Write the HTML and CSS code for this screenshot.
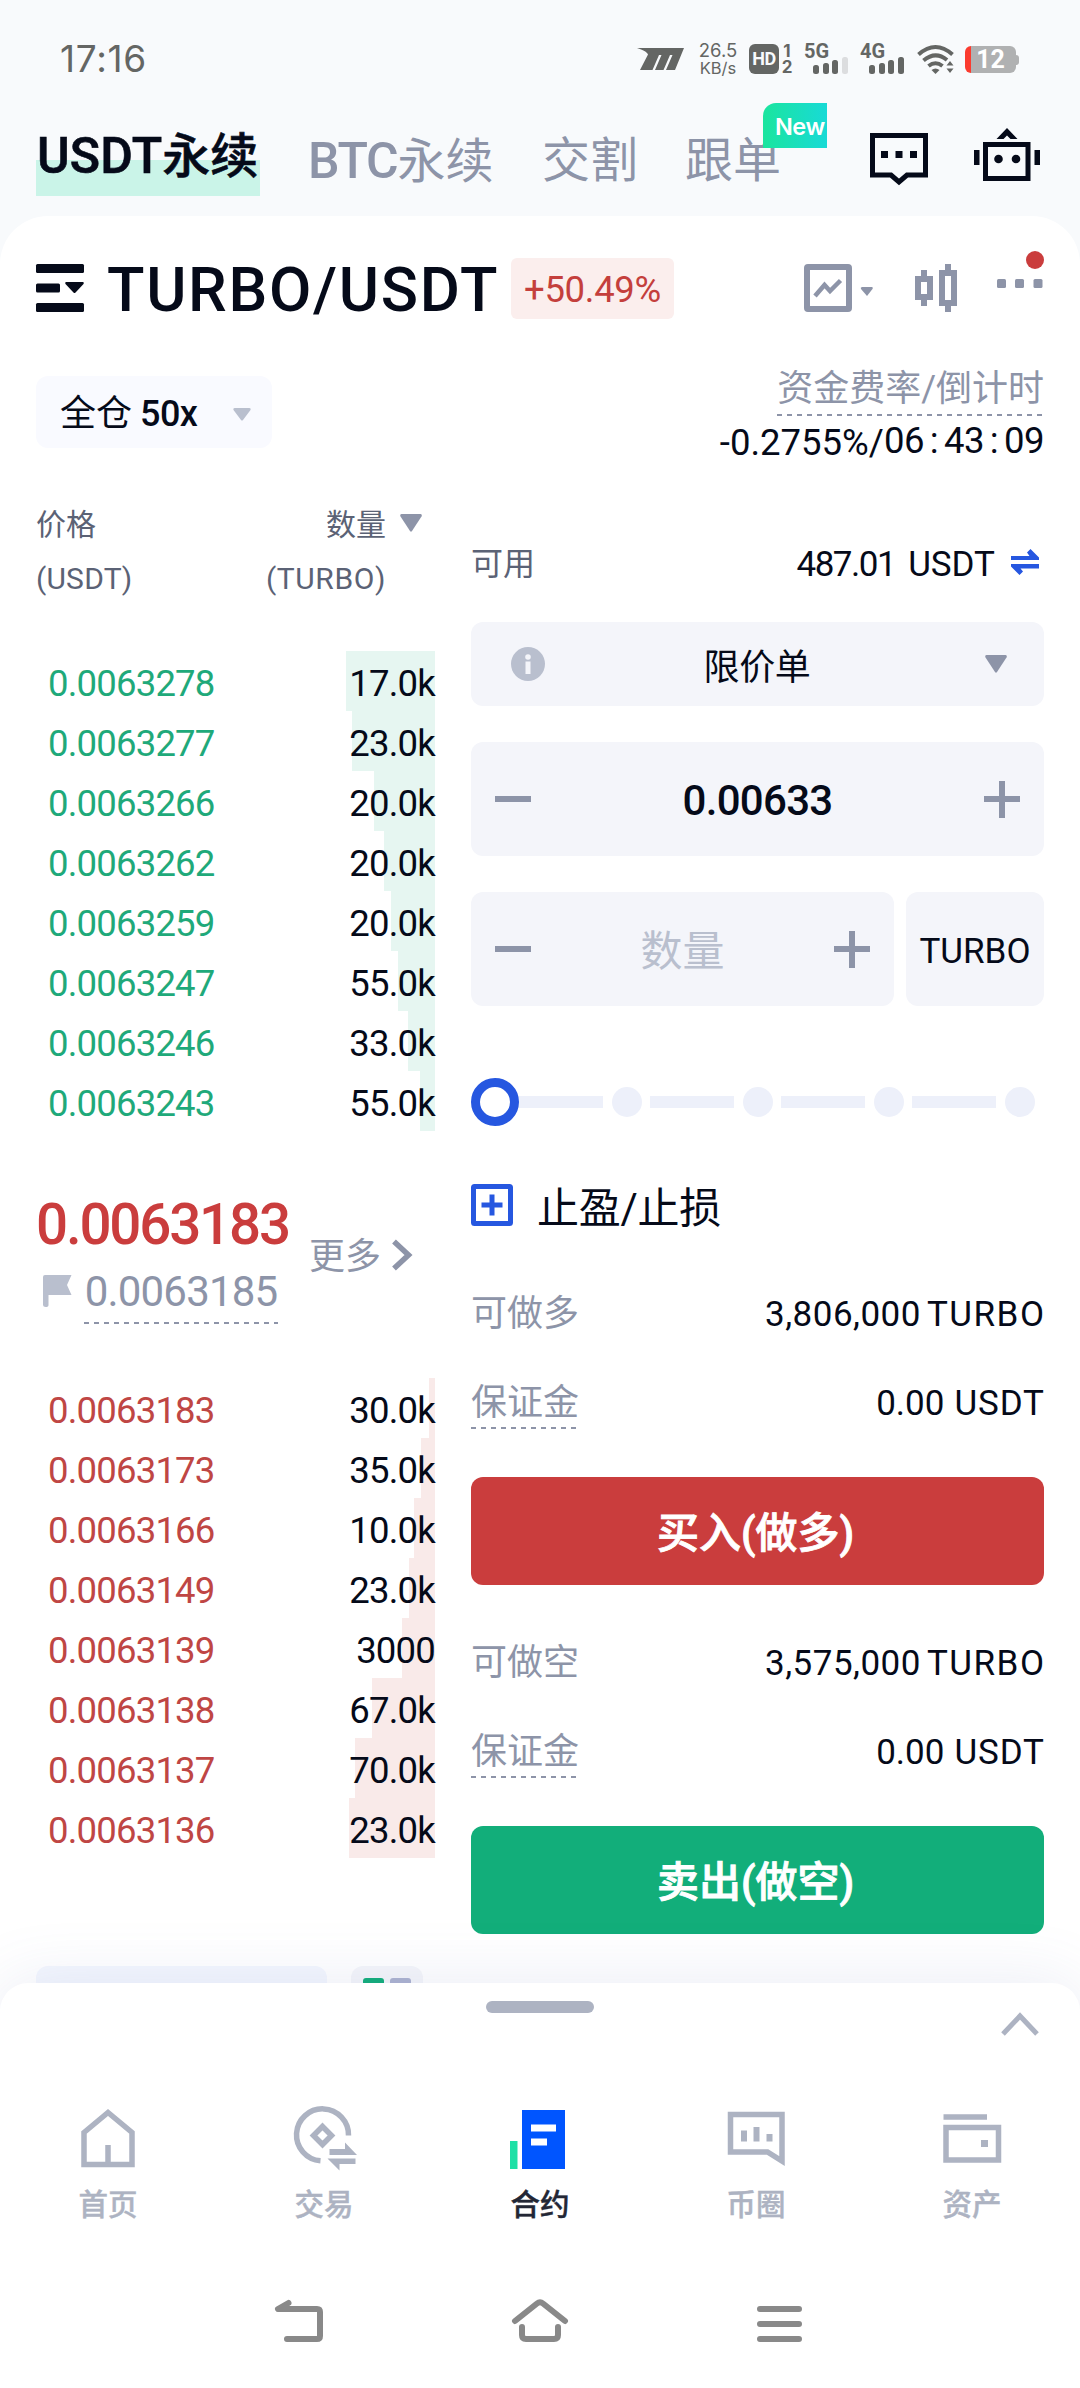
FILE: index.html
```html
<!DOCTYPE html>
<html lang="zh-CN">
<head>
<meta charset="utf-8">
<title>TURBO/USDT 永续合约</title>
<link rel="stylesheet" href="styles.css">
</head>
<body>
<div class="status">
  <span class="clock">17:16</span>
  <svg class="st-m" width="48" height="24" viewBox="0 0 48 24"><path fill="#646664" d="M0 1H47L38 23H29L35.500 8H33L26.500 23H18L24.500 8H22L15.500 23H3L11 7.500C10 5 6 3 0 1Z"/></svg>
  <div class="speed"><span>26.5</span><span>KB/s</span></div>
  <div class="hd">HD</div>
  <div class="sims"><span>1</span><span>2</span></div>
  <div class="net net-5g"><b>5G</b><i class="b1"></i><i class="b2"></i><i class="b3"></i><i class="b4 off"></i></div>
  <div class="net net-4g"><b>4G</b><i class="b1"></i><i class="b2"></i><i class="b3"></i><i class="b4"></i></div>
  <svg class="wifi" width="38" height="30" viewBox="0 0 38 30"><g fill="none" stroke="#646664" stroke-width="4"><path d="M1.500 10.500Q18.500-4.500 35.500 10.500"/><path d="M6.500 16.500Q18.500 6.500 30 16"/><path d="M11.500 22Q18.500 16.500 25.500 22"/></g><path fill="#646664" d="M14.500 26Q18.500 23 22.500 26L18.500 30ZM29.500 21.500L33 17L36.500 21.500ZM29.500 24.500H36.500L33 29Z"/></svg>
  <div class="battery"><span>12</span></div>
</div>

<nav class="tabs">
  <a class="tab active"><span class="lat">USDT</span>永续</a>
  <a class="tab t-btc"><span class="lat">BTC</span>永续</a>
  <a class="tab t-del">交割</a>
  <a class="tab t-copy">跟单<em class="new">New</em></a>
  <svg class="ic-chat" width="58" height="52" viewBox="0 0 58 52"><path fill="none" stroke="#050a19" stroke-width="5" d="M2.500 2.500H55.500V42H37L29 49L21 42H2.500Z"/><path fill="#050a19" d="M11 18h7v7h-7zM25.500 18h7v7h-7zM40 18h7v7h-7z"/></svg>
  <svg class="ic-bot" width="66" height="54" viewBox="0 0 66 54"><path fill="none" stroke="#050a19" stroke-width="5" d="M11.500 16.500H54V50.500H11.500Z"/><path fill="#050a19" d="M0 22h5.500v15H0zM60.500 22H66v15h-5.500zM33 0L43.500 11H36.500L33 7.500L29.500 11H22.500Z"/><circle cx="24.500" cy="31" r="4.300" fill="#050a19"/><circle cx="42" cy="31" r="4.300" fill="#050a19"/></svg>
</nav>

<main class="card">
  <header class="pair">
    <svg width="48" height="48" viewBox="0 0 48 48"><g fill="#050a19"><rect width="48" height="9" rx="1.500"/><rect y="19.500" width="24" height="9" rx="1.500"/><rect y="39" width="48" height="9" rx="1.500"/><path d="M30 18H47Q48.500 18.500 47.500 20L39.500 28.500Q38.500 29.500 37.500 28.500L29.500 20Q28.500 18.500 30 18Z"/></g></svg>
    <h1>TURBO/USDT</h1>
    <span class="change">+50.49%</span>
    <svg class="ic-chart" width="69" height="48" viewBox="0 0 69 48"><rect x="3" y="3" width="42" height="42" fill="none" stroke="#8d94a8" stroke-width="6" rx="1"/><path fill="none" stroke="#8d94a8" stroke-width="4.500" d="M11 32L20.500 21L26 27L36.500 16.500"/><path fill="#8d94a8" d="M58 23H68Q69.500 23.500 68.500 25L63 32L57 25Q56 23.500 58 23Z"/></svg>
    <svg class="ic-candle" width="42" height="48" viewBox="0 0 42 48"><g fill="none" stroke="#8d94a8" stroke-width="6"><path d="M3 15H15V33H3ZM9 6V13M9 35V42M27 9H39V39H27ZM33 0V7M33 41V48"/></g></svg>
    <svg class="ic-more" width="47" height="60" viewBox="0 0 47 60"><g fill="#8d94a8"><rect y="29" width="9" height="9" rx="1.500"/><rect x="18" y="29" width="9" height="9" rx="1.500"/><rect x="36.500" y="29" width="9" height="9" rx="1.500"/></g><circle cx="38" cy="10" r="9" fill="#ca3d3d"/></svg>
  </header>

  <section class="sub">
    <div class="lever"><span>全仓 <b>50x</b></span><svg width="18" height="13" viewBox="0 0 18 13"><path fill="#b9bfce" d="M1.500 0H16.500Q18.500.5 17.500 2L10 12Q9 13 8 12L.5 2Q-.5.5 1.500 0Z"/></svg></div>
    <div class="funding">
      <span class="f-label">资金费率/倒计时</span>
      <div class="f-val"><span class="rate">-0.2755%/</span><span class="hh">06</span><span class="col">:</span><span>43</span><span class="col">:</span><span>09</span></div>
    </div>
  </section>

  <section class="body">
    <div class="book">
      <div class="bk-head"><div>价格<br><span class="u">(USDT)</span></div><div class="r">数量<br><span class="u wide">(TURBO)</span></div><svg width="22" height="18" viewBox="0 0 22 18"><path fill="#8d94a8" d="M1.500 0H20.500Q22.500.5 21.500 2.500L12 17Q11 18.500 10 17L.5 2.500Q-.5.5 1.500 0Z"/></svg></div>
      <div class="rows green">
        <div class="row"><i style="width:89px"></i><span>0.0063278</span><b>17.0k</b></div>
        <div class="row"><i style="width:83px"></i><span>0.0063277</span><b>23.0k</b></div>
        <div class="row"><i style="width:61px"></i><span>0.0063266</span><b>20.0k</b></div>
        <div class="row"><i style="width:51px"></i><span>0.0063262</span><b>20.0k</b></div>
        <div class="row"><i style="width:44px"></i><span>0.0063259</span><b>20.0k</b></div>
        <div class="row"><i style="width:37px"></i><span>0.0063247</span><b>55.0k</b></div>
        <div class="row"><i style="width:27px"></i><span>0.0063246</span><b>33.0k</b></div>
        <div class="row"><i style="width:15px"></i><span>0.0063243</span><b>55.0k</b></div>
      </div>
      <div class="mid">
        <div class="mid-l">
          <div class="last">0.0063183</div>
          <div class="mark"><svg width="29" height="32" viewBox="0 0 29 32"><path fill="#b9bfce" d="M0 2Q0 0 2 0H28.500L24 10L28.500 20H5.500V30Q5.500 32 2.700 32Q0 32 0 30Z"/></svg><span>0.0063185</span></div>
        </div>
        <div class="more">更多<svg width="21" height="32" viewBox="0 0 21 32"><path fill="none" stroke="#8d94a8" stroke-width="5.500" d="M2 2.500L16.500 16L2 29.500"/></svg></div>
      </div>
      <div class="rows red">
        <div class="row"><i style="width:6px"></i><span>0.0063183</span><b>30.0k</b></div>
        <div class="row"><i style="width:14px"></i><span>0.0063173</span><b>35.0k</b></div>
        <div class="row"><i style="width:21px"></i><span>0.0063166</span><b>10.0k</b></div>
        <div class="row"><i style="width:26px"></i><span>0.0063149</span><b>23.0k</b></div>
        <div class="row"><i style="width:33px"></i><span>0.0063139</span><b>3000</b></div>
        <div class="row"><i style="width:63px"></i><span>0.0063138</span><b>67.0k</b></div>
        <div class="row"><i style="width:80px"></i><span>0.0063137</span><b>70.0k</b></div>
        <div class="row"><i style="width:86px"></i><span>0.0063136</span><b>23.0k</b></div>
      </div>
      <div class="depth"><div class="precision"></div><div class="layout"><i></i><i class="g"></i></div></div>
    </div>

    <div class="order">
      <div class="avail"><span class="k">可用</span><span class="v"><span class="amt">487.01</span><span class="unit">USDT</span></span><svg width="28" height="26" viewBox="0 0 28 26"><path fill="#2657e0" d="M0 7H18.500L16 3.500L19.500 0L28 8.500V11H0ZM28 15V19.500H9.500L12 22.500L8.500 26L0 17.500V15Z"/></svg></div>
      <div class="box select"><svg width="34" height="34" viewBox="0 0 34 34"><circle cx="17" cy="17" r="17" fill="#b9bfce"/><circle cx="17" cy="10" r="2.800" fill="#f4f5fa"/><path stroke="#f4f5fa" stroke-width="5" d="M17 14.500V27"/></svg><span>限价单</span><svg width="22" height="18" viewBox="0 0 22 18"><path fill="#8d94a8" d="M1.500 0H20.500Q22.500.5 21.500 2.500L12 17Q11 18.500 10 17L.5 2.500Q-.5.5 1.500 0Z"/></svg></div>
      <div class="box stepper"><i class="minus"></i><span class="num">0.00633</span><i class="plus"></i></div>
      <div class="qty"><div class="box stepper"><i class="minus"></i><span class="ph">数量</span><i class="plus"></i></div><div class="box unitbox">TURBO</div></div>
      <div class="slider"><i class="knob"></i><i class="track first"></i><i class="dot"></i><i class="track"></i><i class="dot"></i><i class="track"></i><i class="dot"></i><i class="track"></i><i class="dot"></i></div>
      <div class="tpsl"><svg width="42" height="42" viewBox="0 0 42 42"><rect x="2.500" y="2.500" width="37" height="37" rx="1" fill="none" stroke="#2657e0" stroke-width="5"/><path stroke="#2657e0" stroke-width="5" d="M10.500 21H31.500M21 10.500V31.500"/></svg><span>止盈/止损</span></div>
      <div class="kv first"><span class="k">可做多</span><span class="v"><span class="long">3,806,000</span><span class="unit tight">TURBO</span></span></div>
      <div class="kv"><span class="k dash">保证金</span><span class="v">0.00<span class="unit">USDT</span></span></div>
      <button class="btn buy">买入(做多)</button>
      <div class="kv second"><span class="k">可做空</span><span class="v"><span class="long">3,575,000</span><span class="unit tight">TURBO</span></span></div>
      <div class="kv"><span class="k dash">保证金</span><span class="v">0.00<span class="unit">USDT</span></span></div>
      <button class="btn sell">卖出(做空)</button>
    </div>
  </section>
</main>

<footer class="sheet">
  <div class="grip"><i></i><svg width="38" height="24" viewBox="0 0 38 24"><path fill="none" stroke="#adb3c2" stroke-width="5" d="M2 22L19 4L36 22"/></svg></div>
  <nav class="nav">
    <a><svg width="64" height="64" viewBox="0 0 64 64"><path fill="none" stroke="#adb3c2" stroke-width="5.500" d="M8 26.500L32 6.500L56 26.500V58.500H8ZM32 39V57"/></svg>首页</a>
    <a><svg width="64" height="64" viewBox="0 0 64 64"><g fill="none" stroke="#adb3c2"><path stroke-width="5.500" d="M56.500 29.500A26 26 0 1 0 28.500 54.800"/><path stroke-width="5.500" d="M30.500 20.500L39.500 29.500L30.500 38.500L21.500 29.500Z"/></g><path fill="#adb3c2" d="M37.500 43H53V36.500L65 49H37.500ZM35.500 52.500H63.500V58H47.500V64.500Z"/></svg>交易</a>
    <a class="on"><svg width="64" height="64" viewBox="0 0 64 64"><path fill="#1fe0a6" d="M2 35h7.500v28H2z"/><path fill="#0055ff" d="M14 4h43v59H14z"/><path fill="#fff" d="M23 18.500h25v7H23zM23 32.500h16v7H23z"/></svg>合约</a>
    <a><svg width="64" height="64" viewBox="0 0 64 64"><path fill="none" stroke="#adb3c2" stroke-width="5.500" d="M6.500 8.500H58V55L43.500 46H6.500Z"/><path stroke="#adb3c2" stroke-width="6" d="M20 24.500V35.500M32.500 21V35.500M45.500 28V35.500"/></svg>币圈</a>
    <a><svg width="64" height="64" viewBox="0 0 64 64"><path fill="none" stroke="#adb3c2" stroke-width="5.500" d="M3.500 11H47M6 21.500H58.500V54H6Z"/><path fill="#adb3c2" d="M41 34h7v7h-7z"/></svg>资产</a>
  </nav>
  <div class="sys">
    <svg width="48" height="44" viewBox="0 0 48 44"><path fill="none" stroke="#898989" stroke-width="6" stroke-linecap="round" stroke-linejoin="round" d="M13.500 4L3 10H42Q45 10 45 13V37Q45 40 42 40H12"/></svg>
    <svg width="58" height="44" viewBox="0 0 58 44"><path fill="none" stroke="#898989" stroke-width="6" stroke-linecap="round" stroke-linejoin="round" d="M4 22L26 4.500Q29 2 32 4.500L54 22M11 28V36Q11 40 15 40H43Q47 40 47 36V28"/></svg>
    <svg width="48" height="44" viewBox="0 0 48 44"><path fill="none" stroke="#898989" stroke-width="6" stroke-linecap="round" d="M3 10H42M3 25H42M3 40H42"/></svg>
  </div>
</footer>
</body>
</html>
```
FILE: styles.css
```css
* { box-sizing: border-box; }
body {
  margin: 0;
  width: 1080px;
  height: 2388px;
  overflow: hidden;
  display: flex;
  flex-direction: column;
  background: #f8fafc;
  color: #050a19;
  font-family: Roboto, "Noto Sans CJK SC", sans-serif;
  white-space: nowrap;
}
svg { display: block; flex: none; overflow: visible; }
i, em { font-style: normal; }

/* status bar */
.status { flex: none; height: 80px; padding: 38px 60px 0; display: flex; align-items: center; color: #646664; }
.clock { width: 577px; font: 400 37px/44px Inter, sans-serif; letter-spacing: .7px; }
.speed { width: 38px; margin-left: 14px; display: flex; flex-direction: column; align-items: center; font: 400 18.500px/18px Inter, sans-serif; }
.speed span + span { font-size: 16.500px; }
.hd { width: 30px; height: 30px; margin-left: 12px; border-radius: 6px; background: #646664; color: #f8fafc; font: 700 18px/30px Roboto, sans-serif; text-align: center; letter-spacing: -.5px; }
.sims { width: 12px; margin-left: 2px; display: flex; flex-direction: column; font: 700 17px/16px Inter, sans-serif; text-align: center; }
.net { width: 46px; height: 30px; display: flex; align-items: flex-end; gap: 3.700px; padding-left: 9px; position: relative; }
.net b { position: absolute; left: 0; top: -1px; font: 700 20px/16px Roboto, sans-serif; }
.net i { width: 6px; border-radius: 2.500px; background: #646664; }
.net .b1 { height: 9px; }
.net .b2 { height: 11px; }
.net .b3 { height: 14px; }
.net .b4 { height: 17px; }
.net .off { background: #dcdddf; }
.net-5g { margin-left: 11px; }
.net-4g { margin-left: 10px; }
.wifi { margin-left: 11px; }
.battery { width: 51px; height: 27px; margin-left: 10px; border-radius: 6px; background: linear-gradient(90deg, #fb3b2f 6px, #b0b1b2 6px); color: #fff; font: 700 25px/28px Roboto, sans-serif; text-align: center; position: relative; }
.battery::after { content: ""; position: absolute; left: 51px; top: 9px; width: 3px; height: 10px; border-radius: 0 3px 3px 0; background: #b0b1b2; }

/* market tabs */
.tabs { flex: none; height: 136px; padding: 40px 36px 0; display: flex; }
.tab { flex: none; height: 82px; font-size: 48px; line-height: 82px; color: #8d94a8; position: relative; }
.active { width: 224px; height: 76px; padding-left: 1px; line-height: 73px; font-weight: 500; color: #050a19; font-size: 48px; background: linear-gradient(transparent 40px, #caf4e8 40px); -webkit-text-stroke: .6px #050a19; }
.lat { font-size: 50px; letter-spacing: .1px; font-weight: 500; }
.t-btc { width: 184px; margin-left: 48px; }
.t-btc .lat { letter-spacing: -1.300px; }
.t-del { width: 96px; margin-left: 50px; }
.t-copy { width: 95px; margin-left: 47px; }
.new { position: absolute; left: 78px; top: -17px; width: 64px; height: 45px; padding-left: 12px; border-radius: 13px 0 0; background: linear-gradient(90deg, #1be59e, #18dad6); color: #fff; font: 600 23.500px/48px Inter, sans-serif; letter-spacing: -.5px; }
.ic-chat { margin: 13px 0 0 90px; }
.ic-bot { margin: 8px 0 0 46px; }

/* card */
.card { flex: none; height: 1795px; border-radius: 48px 48px 0 0; background: #fff; padding: 0 36px; overflow: hidden; }
.pair { height: 144px; display: flex; align-items: center; }
.pair h1 { width: 404px; margin: 3px 0 0 23px; font: 500 61.500px/72px Roboto, sans-serif; letter-spacing: 1.700px; }
.change { flex: none; width: 163px; height: 61px; border-radius: 6px; background: #fbeeed; color: #c43f3c; font-size: 36.500px; line-height: 63px; letter-spacing: -.3px; text-align: center; }
.ic-chart { margin-left: 130px; }
.ic-candle { margin-left: 42px; }
.ic-more { margin: -16px 0 0 40px; }

.sub { height: 120px; display: flex; justify-content: space-between; align-items: flex-start; }
.lever { width: 236px; height: 72px; margin-top: 16px; padding: 4px 21px 0 24px; border-radius: 12px; background: #f9faff; display: flex; align-items: center; font-size: 36px; line-height: 68px; }
.lever b { font-weight: 500; margin-left: -1px; letter-spacing: -.5px; }
.lever svg { margin-left: auto; }
.funding { padding-top: 6px; display: flex; flex-direction: column; align-items: flex-end; font-size: 36px; }
.f-label { height: 50px; line-height: 47px; color: #8d94a8; background: repeating-linear-gradient(90deg, #8d94a8 0 5px, transparent 5px 10px) 0 100% / 100% 2px no-repeat; }
.f-val { display: flex; line-height: 50px; font-size: 36.500px; letter-spacing: -.5px; }
.rate { padding-top: 2px; letter-spacing: 0; }
.col { width: 20px; text-align: center; }

.body { display: grid; grid-template-columns: 399px 573px; column-gap: 36px; }

/* order book */
.bk-head { height: 126px; margin-bottom: 45px; padding-top: 18px; display: flex; font-size: 30px; line-height: 54px; color: #5b6275; }
.bk-head .r { width: 130px; margin-left: auto; text-align: right; }
.bk-head .u { letter-spacing: .2px; }
.bk-head .wide { letter-spacing: .6px; }
.bk-head svg { margin: 16px 13px 0 14px; }
.row { height: 60px; padding: 6px 0 0 12px; display: flex; justify-content: space-between; font-size: 36.500px; line-height: 54px; letter-spacing: -.8px; position: relative; }
.row i { position: absolute; right: 0; top: 0; height: 60px; }
.row span, .row b { position: relative; font-weight: 400; }
.green i { background: #e6f6f1; }
.green span { color: #1fa97a; }
.red i { background: #f9eae9; }
.red span { color: #bf4644; }
.mid { height: 247px; padding-top: 63px; display: flex; }
.mid-l { width: 273px; }
.last { font-size: 56.500px; line-height: 62px; height: 60px; font-weight: 500; color: #ca3d3d; letter-spacing: -2.200px; }
.mark { margin-top: 8px; display: flex; align-items: flex-start; color: #8d94a8; }
.mark svg { margin: 13px 12px 0 7px; }
.mark span { width: 194px; height: 62px; font-size: 42px; line-height: 60px; letter-spacing: -.8px; text-align: center; background: repeating-linear-gradient(90deg, #8d94a8 0 5px, transparent 5px 10px) 0 100% / 100% 2px no-repeat; }
.more { height: 40px; margin-top: 43px; display: flex; align-items: center; font-size: 36px; line-height: 42px; color: #8d94a8; }
.more svg { margin: -5px 0 0 11px; }
.depth { margin-top: 108px; display: flex; }
.precision { width: 291px; height: 72px; border-radius: 12px; background: #f4f7fe; }
.layout { width: 72px; height: 72px; margin-left: 24px; padding: 12px; border-radius: 12px; background: #f5f6fa; display: flex; gap: 6px; }
.layout i { width: 21px; height: 21px; border-radius: 3px; background: #12ae7a; }
.layout .g { background: #adb3d0; }

/* order form */
.order { padding-top: 60px; display: flex; flex-direction: column; }
.avail { height: 48px; display: flex; align-items: center; font-size: 35px; }
.k { font-size: 36px; line-height: 50px; color: #8d94a8; }
.avail .k { font-size: 32px; color: #5b6275; }
.v { margin-left: auto; }
.amt { letter-spacing: -1.500px; margin-right: 3px; }
.long { letter-spacing: .5px; }
.unit { margin-left: 10px; }
.unit.tight { margin-left: 6px; }
.kv .unit { letter-spacing: .9px; margin-right: -.9px; }
.kv .unit.tight { letter-spacing: 1.500px; margin-right: -1.500px; }
.avail svg { margin: -5px 5px 0 16px; }
.box { border-radius: 12px; background: #f4f5fa; display: flex; align-items: center; justify-content: space-between; }
.select { height: 84px; margin-top: 34px; padding: 0 37px 0 40px; font-size: 36px; line-height: 84px; }
.select span { margin-left: -16px; padding-top: 7px; letter-spacing: -.3px; }
.stepper { height: 114px; margin-top: 36px; padding: 0 24px; line-height: 114px; }
.minus, .plus { width: 36px; height: 37px; background: linear-gradient(#8d94a8, #8d94a8) 50% 50% / 36px 6px no-repeat; }
.plus { background: linear-gradient(#8d94a8, #8d94a8) 50% 50% / 36px 6px no-repeat, linear-gradient(#8d94a8, #8d94a8) 50% 50% / 6px 37px no-repeat; }
.num { font-size: 42px; font-weight: 500; padding-top: 4px; letter-spacing: -.7px; }
.ph { font-size: 42px; color: #b9bfce; padding-top: 6px; }
.qty { display: flex; gap: 12px; margin-top: 36px; }
.qty .stepper { flex: 1; margin-top: 0; }
.unitbox { width: 138px; justify-content: center; font-size: 35px; padding-top: 4px; }
.slider { height: 48px; margin-top: 72px; display: flex; align-items: center; }
.knob { width: 48px; height: 48px; border: 9px solid #2657e0; border-radius: 50%; }
.track { width: 84px; height: 12px; margin: 0 8.500px; background: #edf0fa; }
.track.first { margin-left: 0; }
.dot { width: 30px; height: 30px; border-radius: 50%; background: #edf0fa; }
.tpsl { height: 48px; margin-top: 56px; display: flex; align-items: center; gap: 24px; font-size: 42px; line-height: 48px; letter-spacing: -.3px; }
.tpsl svg { margin-top: -2px; }
.tpsl span { padding-top: 5px; }
.kv { height: 48px; margin-top: 41px; display: flex; font-size: 35px; line-height: 52px; }
.kv.first { margin-top: 59px; }
.kv.second { margin-top: 53px; }
.dash { height: 51px; background: repeating-linear-gradient(90deg, #8d94a8 0 5px, transparent 5px 10px) 0 100% / 100% 2px no-repeat; }
.btn { height: 108px; margin-top: 51px; padding: 6px 4px 0 0; border: 0; border-radius: 12px; color: #fff; font: 500 42px/100px Roboto, "Noto Sans CJK SC", sans-serif; -webkit-text-stroke: .9px #fff; }
.buy { background: #ca3d3d; }
.sell { background: #12ae7a; }

/* bottom sheet */
.sheet { flex: none; height: 405px; margin-top: -28px; border-radius: 28px 28px 0 0; background: #fff; box-shadow: 0 0 66px rgba(90, 110, 180, .13); position: relative; }
.grip { height: 110px; padding: 18px 41px 0 486px; display: flex; justify-content: space-between; align-items: flex-start; }
.grip i { width: 108px; height: 12px; border-radius: 6px; background: #adb3c2; }
.grip svg { margin-top: 11px; }
.nav { display: grid; grid-template-columns: repeat(5, 216px); }
.nav a { padding-top: 12.500px; display: flex; flex-direction: column; align-items: center; font-size: 29.500px; line-height: 44px; font-weight: 500; color: #adb3c2; -webkit-text-stroke: .4px; }
.nav svg { margin-bottom: 13.500px; }
.nav .on { color: #232735; }
.sys { padding: 72px 275px 0; display: flex; justify-content: space-between; }
```
